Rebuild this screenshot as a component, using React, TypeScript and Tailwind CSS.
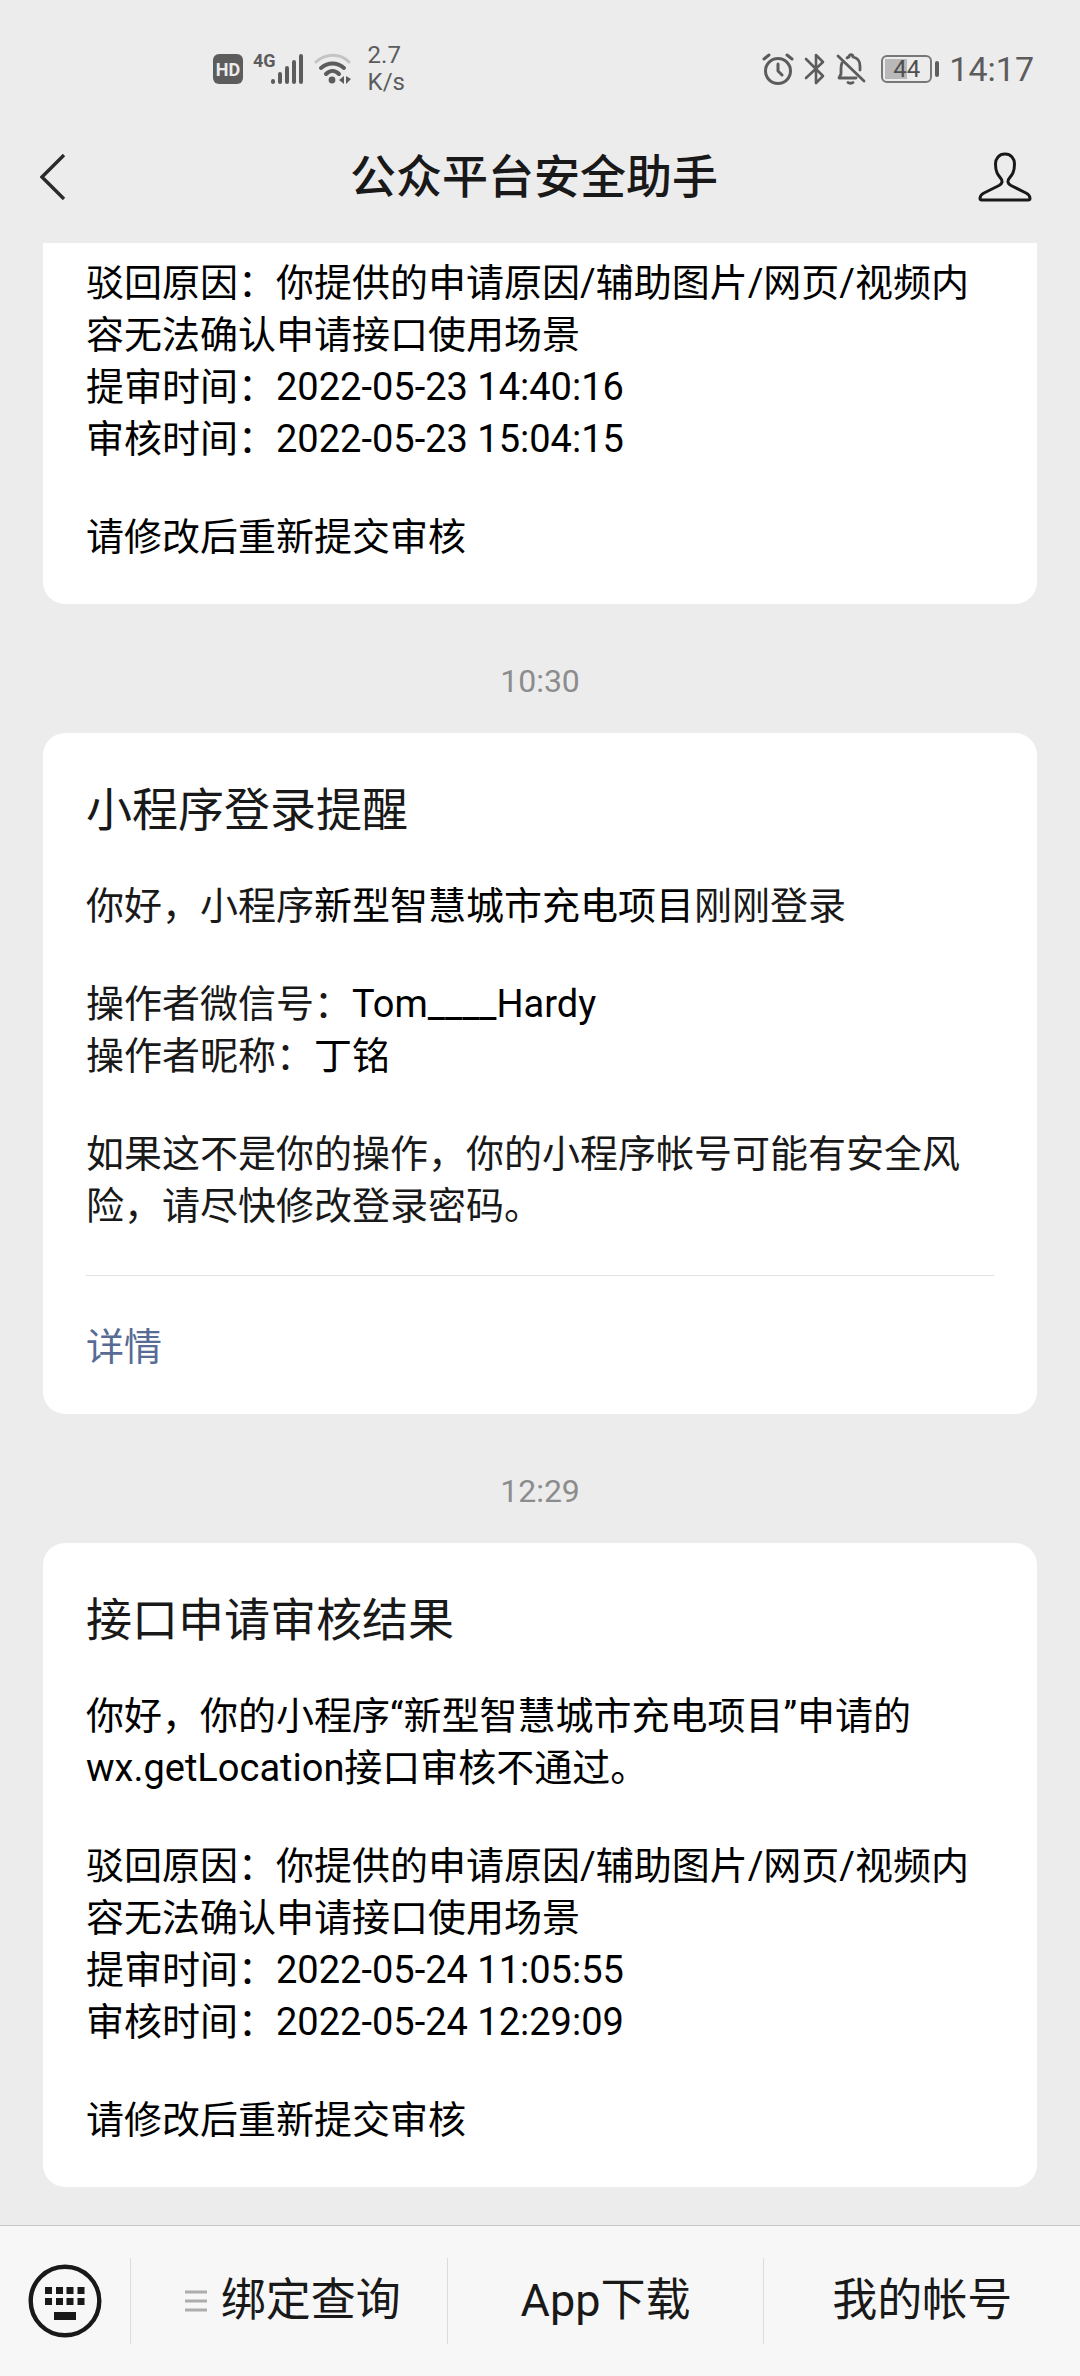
import { ReactNode } from 'react';

const inkColor = '#5c5c5c';

function SignalIcon() {
  return (
    <svg width="34" height="32" viewBox="0 0 34 32" stroke={inkColor} strokeWidth="4" strokeLinecap="round" aria-hidden="true">
      <path d="M3 29v-1M10 29v-8M17 29V15M24 29V9M31 29V3" />
    </svg>
  );
}

function WifiIcon() {
  return (
    <svg width="38" height="32" viewBox="0 0 38 32" fill="none" strokeWidth="3" strokeLinecap="round" aria-hidden="true">
      <path d="M2 9C12 0 26 0 35 9" stroke="#c4c4c4" />
      <path d="M7 15c7-6 16-6 23 0" stroke={inkColor} strokeWidth="4" />
      <path d="M12 21c4-4 9-4 13 0" stroke={inkColor} strokeWidth="4" />
      <circle cx="18" cy="27" r="3.4" fill={inkColor} />
      <path d="M30 23v8l-5-4zM32 23v8l5-5z" fill={inkColor} />
    </svg>
  );
}

function AlarmIcon() {
  return (
    <svg width="32" height="32" viewBox="0 0 32 32" fill="none" stroke={inkColor} strokeWidth="3" strokeLinecap="round" strokeLinejoin="round" aria-hidden="true">
      <circle cx="16" cy="18" r="12.5" />
      <path d="M16 11v7l4 4M2 6l5-4M30 6l-5-4" />
    </svg>
  );
}

function BluetoothIcon() {
  return (
    <svg width="22" height="34" viewBox="0 0 22 34" fill="none" stroke={inkColor} strokeWidth="2.6" strokeLinejoin="round" strokeLinecap="round" aria-hidden="true">
      <path d="M2 7l17 17-7 7V3l7 7L2 26" />
    </svg>
  );
}

function BellOffIcon() {
  return (
    <svg width="30" height="32" viewBox="0 0 30 32" fill="none" stroke={inkColor} strokeWidth="2.8" strokeLinejoin="round" strokeLinecap="round" aria-hidden="true">
      <path d="M2 3l26 25" />
      <path d="M6 10c-1 2-1 4-1 6v5l-2 4h17" />
      <path d="M11 5c1-1 2-1 2-1 0-3 4-3 4 0 5 1 7 5 7 9v4" />
      <path d="M12 29.500c1 1 4 1 5 0" />
    </svg>
  );
}

function BatteryIcon() {
  return (
    <div className="flex items-center gap-[3px]">
      <div className="flex h-7 w-[51px] items-center rounded-md border-2 border-[#777777] bg-[linear-gradient(#b9b9b9,#b9b9b9)] bg-[length:22px_20px] bg-[position:2px_2px] bg-no-repeat">
        <span className="w-full text-center text-[24px] leading-6 text-[#4f4f4f]">44</span>
      </div>
      <div className="h-4 w-1 rounded-full bg-[#5c5c5c]" />
    </div>
  );
}

function StatusBar() {
  return (
    <div className="flex h-[111px] items-center justify-between pt-[27px] pr-[46px] pl-[213px] text-[#5c5c5c]">
      <div className="flex items-center">
        <span className="flex size-[30px] items-center justify-center rounded-md bg-[#5c5c5c] text-[18px] font-bold text-[#ececec]">
          HD
        </span>
        <div className="ml-[10px] flex items-start">
          <span className="-mr-[6px] text-[18px] leading-4 font-bold">4G</span>
          <SignalIcon />
        </div>
        <div className="ml-[10px]">
          <WifiIcon />
        </div>
        <div className="ml-4 text-[24px] leading-[27px]">
          <p>2.7</p>
          <p>K/s</p>
        </div>
      </div>
      <div className="flex items-center">
        <AlarmIcon />
        <div className="ml-[10px]">
          <BluetoothIcon />
        </div>
        <div className="mr-[15px] ml-[10px]">
          <BellOffIcon />
        </div>
        <BatteryIcon />
        <span className="ml-[10px] text-[34px] leading-10">14:17</span>
      </div>
    </div>
  );
}

function TitleBar() {
  return (
    <header className="flex h-[132px] items-center pr-12 pl-10 text-[#191919]">
      <button type="button" aria-label="返回" className="flex w-[50px] items-center">
        <svg width="26" height="46" viewBox="0 0 26 46" fill="none" stroke="#2b2b2b" strokeWidth="3.4" aria-hidden="true">
          <path d="M24 1L2 23l22 22" />
        </svg>
      </button>
      <h1 className="flex-1 text-center text-[46px] leading-[54px] font-medium">公众平台安全助手</h1>
      <button type="button" aria-label="帐号资料">
        <svg width="54" height="50" viewBox="0 0 54 50" fill="none" stroke="#191919" strokeWidth="3" strokeLinejoin="round" aria-hidden="true">
          <path d="M27 2C21 2 17.500 6.500 17.500 12C17.500 20 20 23 22.500 26C25 29 24.500 31.500 21 33.500L6 41C3 42.500 2 44 2 46.500Q2 48 4 48H50Q52 48 52 46.500C52 44 51 42.500 48 41L33 33.500C29.500 31.500 29 29 31.500 26C34 23 36.500 20 36.500 12C36.500 6.500 33 2 27 2Z" />
        </svg>
      </button>
    </header>
  );
}

function MessageTime({ children }: { children: string }) {
  return (
    <time className="block pt-[57px] pb-8 text-center text-[32px] leading-10 text-[#8c8c8c]">{children}</time>
  );
}

interface MessageCardProps {
  title: string;
  children: ReactNode;
}

function MessageCard({ title, children }: MessageCardProps) {
  return (
    <article className="rounded-[22px] bg-white px-[43px] pt-[50px] pb-[41px]">
      <h2 className="mb-[43px] text-[46px] leading-[54px] text-[#191919]">{title}</h2>
      {children}
    </article>
  );
}

interface RejectionProps {
  submitted: string;
  reviewed: string;
}

function Rejection({ submitted, reviewed }: RejectionProps) {
  return (
    <div className="flex flex-col gap-[46px]">
      <div>
        <p>驳回原因：你提供的申请原因/辅助图片/网页/视频内容无法确认申请接口使用场景</p>
        <p>提审时间：{submitted}</p>
        <p>审核时间：{reviewed}</p>
      </div>
      <p>请修改后重新提交审核</p>
    </div>
  );
}

function MenuBar() {
  const item = 'flex h-[86px] flex-1 items-center justify-center border-l border-[#dcdcdc]';

  return (
    <nav className="flex items-center border-t border-[#c8c8c8] bg-[#f7f7f7] py-8 text-[45px] leading-[54px] text-[#191919]">
      <button type="button" aria-label="键盘" className="flex w-[130px] justify-center">
        <svg width="74" height="74" viewBox="0 0 74 74" fill="#191919" aria-hidden="true">
          <circle cx="37" cy="37" r="34.3" fill="none" stroke="#191919" strokeWidth="4.400" />
          <path d="M17 23h7v7h-7zM28 23h7v7h-7zM38.500 23h7v7h-7zM49.500 23h7v7h-7z" />
          <path d="M17 34h7v7h-7zM28 34h7v7h-7zM38.500 34h7v7h-7zM49.500 34h7v7h-7z" />
          <path d="M26 48h22v8H26z" />
        </svg>
      </button>
      <button type="button" className={`${item} gap-[14px]`}>
        <svg width="22" height="22" viewBox="0 0 22 22" stroke="#adadad" strokeWidth="3" className="ml-2" aria-hidden="true">
          <path d="M0 2h22M0 11h22M0 20h22" />
        </svg>
        绑定查询
      </button>
      <button type="button" className={item}>
        App下载
      </button>
      <button type="button" className={item}>
        我的帐号
      </button>
    </nav>
  );
}

export default function App() {
  return (
    <div
      lang="zh-CN"
      className="flex min-h-screen flex-col bg-[#ececec] font-[Roboto,'Noto_Sans_CJK_SC',sans-serif] text-black"
    >
      <StatusBar />
      <TitleBar />

      <main className="flex-1 px-[43px] pb-[38px] text-[38px] leading-[52px]">
        {/* Older message, scrolled half under the title bar */}
        <article className="rounded-b-[22px] bg-white px-[43px] pt-[14px] pb-[41px]">
          <Rejection submitted="2022-05-23 14:40:16" reviewed="2022-05-23 15:04:15" />
        </article>

        <MessageTime>10:30</MessageTime>
        <MessageCard title="小程序登录提醒">
          <div className="flex flex-col gap-[46px] text-[#191919]">
            <p>
              你好，小程序<span className="text-black">新型智慧城市充电项目</span>刚刚登录
            </p>
            <div>
              <p>
                操作者微信号：<span className="text-black">Tom____Hardy</span>
              </p>
              <p>
                操作者昵称：<span className="text-black">丁铭</span>
              </p>
            </div>
            <p>如果这不是你的操作，你的小程序帐号可能有安全风险，请尽快修改登录密码。</p>
          </div>
          <div className="mt-[43px] border-t border-[#e2e2e2] pt-[45px]">
            <a href="#detail" className="block text-[#576b95]">
              详情
            </a>
          </div>
        </MessageCard>

        <MessageTime>12:29</MessageTime>
        <MessageCard title="接口申请审核结果">
          <p className="mb-[46px]">你好，你的小程序“新型智慧城市充电项目”申请的wx.getLocation接口审核不通过。</p>
          <Rejection submitted="2022-05-24 11:05:55" reviewed="2022-05-24 12:29:09" />
        </MessageCard>
      </main>

      <MenuBar />
    </div>
  );
}
